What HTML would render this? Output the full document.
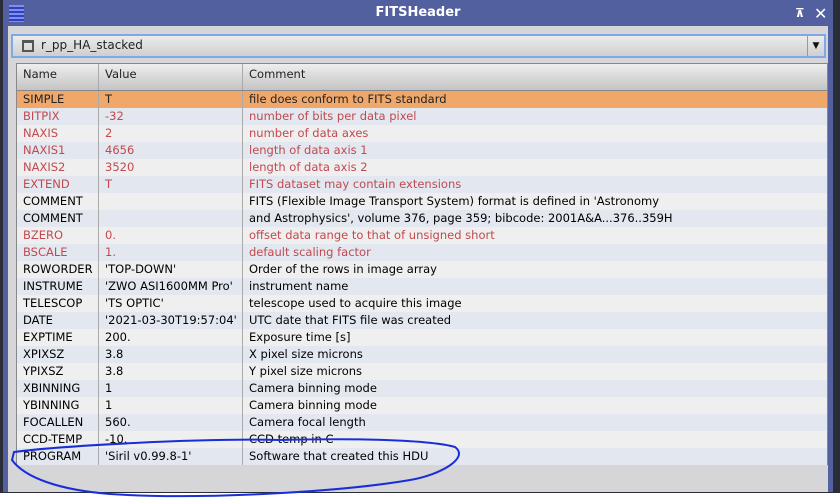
<!DOCTYPE html>
<html><head><style>
body{margin:0;width:840px;height:504px;background:#2a2d38;position:relative;overflow:hidden;font-family:"DejaVu Sans","Liberation Sans",sans-serif;font-size:11.5px;}
.win{position:absolute;left:3px;top:0;width:830px;height:492px;background:#5360a0;}
.title{position:absolute;left:0;top:0;width:830px;height:26px;color:#fff;font-weight:bold;font-size:13px;text-align:center;line-height:26px;}
.body{position:absolute;left:5px;top:26px;width:820px;height:466px;background:#d6d6d8;}
.combo{position:absolute;left:11px;top:34px;width:811px;height:20px;border:2px solid #7fa8e8;background:linear-gradient(#ececec,#cfcfcf);}
.tbl{position:absolute;left:16px;top:63px;width:810px;border:1px solid #888;border-bottom:none;}
.hdr{height:26px;background:linear-gradient(#eeeeee,#c4c4c4);border-bottom:1px solid #888;position:relative;}
.row{height:17px;position:relative;line-height:17px;}
.c{position:absolute;top:0;height:100%;white-space:nowrap;}
.c1{left:0;width:81px;padding-left:6px;}
.c2{left:81px;width:137px;padding-left:6px;border-left:1px solid #aaa;}
.c3{left:225px;padding-left:6px;border-left:1px solid #aaa;height:100%;}
.hdr .c{line-height:20px;color:#222}
.a{background:#e3e7ef}.b{background:#efefef}
.r{color:#c04a50}
.sel{background:#f0a86a;color:#222}
</style></head><body>
<div class="win">
 <div class="title">FITSHeader</div>
 <div style="position:absolute;left:6px;top:5px;width:15px;height:17px;background:repeating-linear-gradient(#7f8ff0 0 2px,#3040c0 2px 4px);"></div>
 <div style="position:absolute;left:792px;top:8px;color:#fff;font-size:12px;line-height:10px;font-weight:bold">&#8892;</div>
 <div style="position:absolute;left:811px;top:4px;color:#fff;font-size:16px;font-weight:bold">✕</div>
 <div class="body"></div>
</div>
<div class="combo">
 <div style="position:absolute;left:9px;top:4px;width:8px;height:7px;border:2px solid #555;border-top-width:3px"></div>
 <div style="position:absolute;left:28px;top:2px;color:#222;font-size:12px">r_pp_HA_stacked</div>
 <div style="position:absolute;right:0;top:0;width:16px;height:20px;border-left:1px solid #999;color:#111;font-size:9px;text-align:center;line-height:20px">▼</div>
</div>
<div class="tbl">
<div class="hdr"><div class="c c1">Name</div><div class="c c2">Value</div><div class="c c3">Comment</div></div>
<div class="row sel"><div class="c c1">SIMPLE</div><div class="c c2">T</div><div class="c c3">file does conform to FITS standard</div></div>
<div class="row a r"><div class="c c1">BITPIX</div><div class="c c2">-32</div><div class="c c3">number of bits per data pixel</div></div>
<div class="row b r"><div class="c c1">NAXIS</div><div class="c c2">2</div><div class="c c3">number of data axes</div></div>
<div class="row a r"><div class="c c1">NAXIS1</div><div class="c c2">4656</div><div class="c c3">length of data axis 1</div></div>
<div class="row b r"><div class="c c1">NAXIS2</div><div class="c c2">3520</div><div class="c c3">length of data axis 2</div></div>
<div class="row a r"><div class="c c1">EXTEND</div><div class="c c2">T</div><div class="c c3">FITS dataset may contain extensions</div></div>
<div class="row b"><div class="c c1">COMMENT</div><div class="c c2"></div><div class="c c3">FITS (Flexible Image Transport System) format is defined in 'Astronomy</div></div>
<div class="row a"><div class="c c1">COMMENT</div><div class="c c2"></div><div class="c c3">and Astrophysics', volume 376, page 359; bibcode: 2001A&amp;A...376..359H</div></div>
<div class="row b r"><div class="c c1">BZERO</div><div class="c c2">0.</div><div class="c c3">offset data range to that of unsigned short</div></div>
<div class="row a r"><div class="c c1">BSCALE</div><div class="c c2">1.</div><div class="c c3">default scaling factor</div></div>
<div class="row b"><div class="c c1">ROWORDER</div><div class="c c2">'TOP-DOWN'</div><div class="c c3">Order of the rows in image array</div></div>
<div class="row a"><div class="c c1">INSTRUME</div><div class="c c2">'ZWO ASI1600MM Pro'</div><div class="c c3">instrument name</div></div>
<div class="row b"><div class="c c1">TELESCOP</div><div class="c c2">'TS OPTIC'</div><div class="c c3">telescope used to acquire this image</div></div>
<div class="row a"><div class="c c1">DATE</div><div class="c c2">'2021-03-30T19:57:04'</div><div class="c c3">UTC date that FITS file was created</div></div>
<div class="row b"><div class="c c1">EXPTIME</div><div class="c c2">200.</div><div class="c c3">Exposure time [s]</div></div>
<div class="row a"><div class="c c1">XPIXSZ</div><div class="c c2">3.8</div><div class="c c3">X pixel size microns</div></div>
<div class="row b"><div class="c c1">YPIXSZ</div><div class="c c2">3.8</div><div class="c c3">Y pixel size microns</div></div>
<div class="row a"><div class="c c1">XBINNING</div><div class="c c2">1</div><div class="c c3">Camera binning mode</div></div>
<div class="row b"><div class="c c1">YBINNING</div><div class="c c2">1</div><div class="c c3">Camera binning mode</div></div>
<div class="row a"><div class="c c1">FOCALLEN</div><div class="c c2">560.</div><div class="c c3">Camera focal length</div></div>
<div class="row b"><div class="c c1">CCD-TEMP</div><div class="c c2">-10.</div><div class="c c3">CCD temp in C</div></div>
<div class="row a"><div class="c c1">PROGRAM</div><div class="c c2">'Siril v0.99.8-1'</div><div class="c c3">Software that created this HDU</div></div>
</div>
<div style="position:absolute;left:0;top:493px;width:840px;height:11px;background:#fff"></div>
<svg style="position:absolute;left:0;top:0" width="840" height="504"><path d="M14,452 C60,446 200,438 280,440 C360,438 430,440 455,447 C470,458 440,475 410,480 C340,492 200,500 110,494 C60,490 25,478 12,460 Z" fill="none" stroke="#1a2ed8" stroke-width="2"/></svg>
</body></html>
